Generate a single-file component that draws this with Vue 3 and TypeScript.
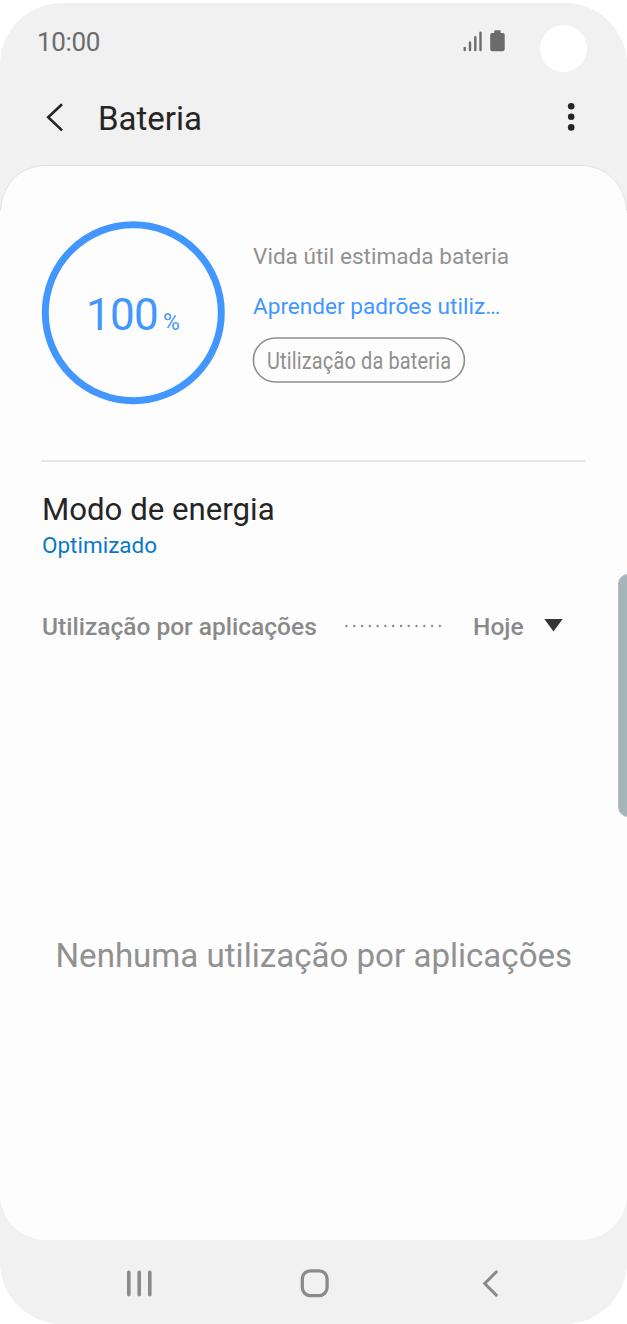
<script setup lang="ts">
const title: string = 'Bateria'
const level: number = 100
const ringRadius: number = 88
</script>

<template>
  <div class="phone">
    <header class="top">
      <div class="status">
        <span class="time">10:00</span>
        <svg class="signal" width="44" height="24" viewBox="0 0 44 24">
          <g stroke="#6b6b6b" stroke-width="2.4" stroke-linecap="round">
            <path d="M2.7 19v2M8 13.5V21M13.3 8.3V21M18.5 3.7V21" />
          </g>
          <path d="M33 1.2h4.8q.8 0 .8.8v2H40.7q2 0 2 2v14.2q0 2-2 2H30.2q-2 0-2-2V6q0-2 2-2h2V2q0-.8.8-.8z" fill="#6b6b6b" />
        </svg>
        <span class="camera"></span>
      </div>
      <div class="appbar">
        <svg class="back" width="20" height="32" viewBox="0 0 20 32">
          <path d="M18 3.2 4.2 16.3 18 29.4" fill="none" stroke="#252525" stroke-width="2.6" />
        </svg>
        <h1>{{ title }}</h1>
        <svg class="more" width="8" height="30" viewBox="0 0 8 30">
          <circle cx="4.2" cy="4.2" r="3.3" />
          <circle cx="4.2" cy="14.8" r="3.3" />
          <circle cx="4.2" cy="25.4" r="3.3" />
        </svg>
      </div>
    </header>

    <main class="panel">
      <svg class="edge" width="627" height="48" viewBox="0 0 627 48">
        <path d="M.5 45.5C1.5 20 20 .5 46 .5H581C606 .5 625.5 20 626.5 45.5" fill="none" stroke="#dedede" />
      </svg>
      <section class="summary">
        <div class="gauge">
          <svg class="ring" width="185" height="185" viewBox="0 0 185 185">
            <circle cx="92.3" cy="92.7" :r="ringRadius" fill="none" stroke="#4297ff" stroke-width="7" />
          </svg>
          <span class="level">{{ level }}</span>
          <span class="percent">%</span>
        </div>
        <div class="details">
          <p class="estimate">Vida útil estimada bateria</p>
          <p class="learning">Aprender padrões utiliz…</p>
          <button class="usage">
            <svg class="usage-outline" width="214" height="46" viewBox="0 0 214 46">
              <rect x="1.4" y="1" width="211" height="44" rx="22" fill="none" stroke="#8f8f8f" stroke-width="1.6" />
            </svg>
            <span class="usage-label">Utilização da bateria</span>
          </button>
        </div>
      </section>
      <div class="divider"></div>
      <section class="mode">
        <h2>Modo de energia</h2>
        <p>Optimizado</p>
      </section>
      <section class="apps">
        <span class="apps-label">Utilização por aplicações</span>
        <svg class="dots" width="100" height="4" viewBox="0 0 100 4">
          <path d="M2.5 2H98" stroke="#8c8c8c" stroke-width="2.4" stroke-linecap="round" stroke-dasharray="0 7.78" />
        </svg>
        <span class="today">Hoje</span>
        <svg class="caret" width="19" height="13" viewBox="0 0 19 13">
          <path d="M.3 0h18.4L9.5 12.6z" fill="#353535" />
        </svg>
      </section>
      <p class="empty">Nenhuma utilização por aplicações</p>
    </main>

    <nav class="nav">
      <svg class="recents" width="28" height="28" viewBox="0 0 28 28">
        <path d="M2.8 3.2v22.6M13.2 3.2v22.6M23.8 3.2v22.6" stroke="#8b8b8b" stroke-width="3.6" stroke-linecap="round" />
      </svg>
      <svg class="home" width="30" height="30" viewBox="0 0 30 30">
        <rect x="2.3" y="2.8" width="24.8" height="24.8" rx="8" fill="none" stroke="#8b8b8b" stroke-width="3.3" />
      </svg>
      <svg class="return" width="18" height="28" viewBox="0 0 18 28">
        <path d="M14.3 2.9 2.7 14.5l11.6 11.6" fill="none" stroke="#8b8b8b" stroke-width="3" stroke-linecap="round" />
      </svg>
    </nav>
    <div class="edge-handle"></div>
  </div>
</template>

<style>
body {
  background: #fff;
}
</style>

<style scoped>
.phone {
  position: relative;
  box-sizing: border-box;
  width: 627px;
  height: 1321px;
  margin-top: 3px;
  overflow: hidden;
  border-radius: 62px;
  background: #f1f1f1;
  font-family: Roboto, "Liberation Sans", sans-serif;
  white-space: nowrap;
  display: flex;
  flex-direction: column;
}
h1, h2, p {
  margin: 0;
  font-weight: 400;
}
svg {
  display: block;
  flex: none;
}
.top {
  height: 162px;
}
.status {
  display: flex;
  height: 78px;
  padding-left: 37px;
}
.time {
  width: 425px;
  padding-top: 24px;
  color: #6b6b6b;
  font-size: 26px;
  letter-spacing: -0.35px;
  line-height: 30px;
}
.signal {
  margin-top: 26px;
}
.camera {
  width: 47px;
  height: 47px;
  margin: 22px 0 0 34px;
  border-radius: 50%;
  background: #fff;
}
.appbar {
  display: flex;
  padding-left: 44px;
}
.back {
  margin-top: 20px;
}
h1 {
  width: 469px;
  margin: 18px 0 0 34px;
  color: #252525;
  font-size: 33px;
  line-height: 40px;
}
.more {
  margin-top: 21px;
  fill: #252525;
}
.panel {
  position: relative;
  box-sizing: border-box;
  height: 1075px;
  padding: 55px 42px 0;
  border-radius: 46px;
  background: #fdfdfd;
}
.edge {
  position: absolute;
  top: 0;
  left: 0;
}
.summary {
  display: flex;
  height: 240px;
}
.gauge {
  position: relative;
  display: flex;
  align-items: baseline;
  box-sizing: border-box;
  width: 184px;
  height: 184px;
  padding: 69px 0 0 45px;
  margin-left: -1px;
  color: #4297ff;
}
.ring {
  position: absolute;
  top: 0;
  left: 0;
}
.level {
  width: 77px;
  font-size: 44px;
  letter-spacing: -0.7px;
  line-height: 52px;
}
.percent {
  font-size: 23px;
}
.details {
  margin-left: 28px;
}
.estimate {
  margin-top: 23px;
  color: #919191;
  font-size: 22.6px;
  line-height: 28px;
}
.learning {
  margin-top: 22px;
  color: #4297ff;
  font-size: 22.6px;
  line-height: 28px;
}
.usage {
  position: relative;
  display: flex;
  align-items: center;
  width: 214px;
  height: 46px;
  margin-top: 16px;
  margin-left: -1px;
  padding: 2px 15px 0;
  border: 0;
  background: transparent;
  color: #8f8f8f;
  font-family: inherit;
  font-size: 23px;
}
.usage-outline {
  position: absolute;
  top: 0;
  left: 0;
}
.usage-label {
  letter-spacing: 0.2px;
  transform: scaleX(0.865);
  transform-origin: left;
}
.divider {
  height: 2px;
  margin: 0 0 0 -1px;
  background: #e7e7e7;
}
.mode {
  height: 150px;
}
.mode h2 {
  padding-top: 29px;
  color: #252525;
  font-size: 31.2px;
  line-height: 38px;
}
.mode p {
  margin-top: 2px;
  color: #0a78cb;
  font-size: 22.5px;
  line-height: 28px;
}
.apps {
  display: flex;
  color: #8a8a8a;
  font-size: 24.5px;
  font-weight: 500;
  line-height: 30px;
}
.apps-label {
  width: 302px;
}
.dots {
  margin-top: 12px;
}
.today {
  width: 73px;
  margin-left: 29px;
}
.caret {
  margin-top: 7px;
  margin-left: -2px;
}
.empty {
  margin-top: 294px;
  margin-left: 13.5px;
  color: #919191;
  font-size: 33.1px;
  line-height: 40px;
}
.nav {
  display: flex;
  height: 84px;
  padding: 29px 0 0 126px;
  box-sizing: border-box;
}
.home {
  margin-left: 146px;
  margin-top: -1px;
}
.return {
  margin-left: 152px;
}
.edge-handle {
  position: absolute;
  top: 571px;
  left: 618px;
  width: 20px;
  height: 241px;
  border: 1px solid #b5b9bb;
  border-radius: 10px;
  background: #a5b3bb;
}
</style>
